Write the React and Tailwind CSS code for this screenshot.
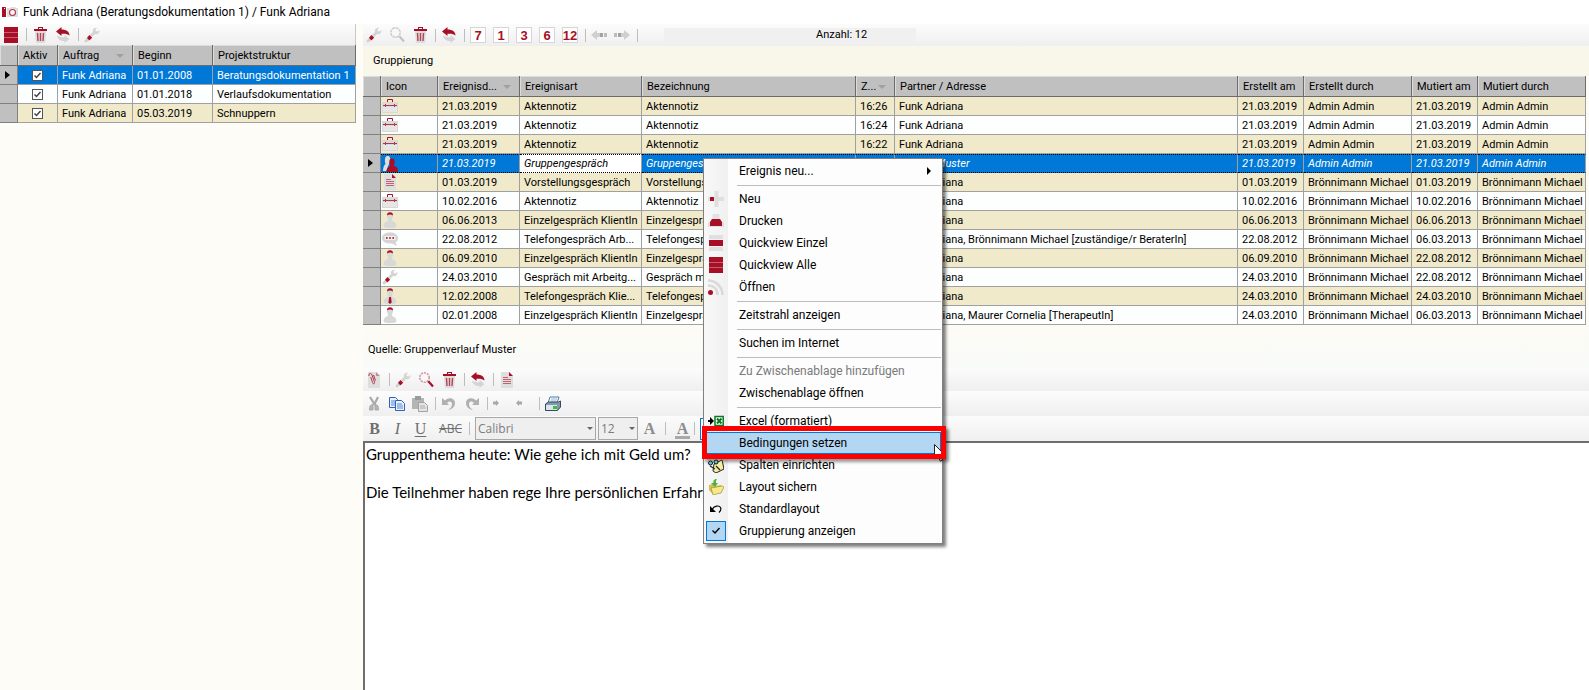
import React from 'react';

const RED = '#a80f26';
const GREY = '#d4d4d4';

function Icon({ children, className = '' }) {
  return (
    <svg viewBox="0 0 16 16" width="16" height="16" className={'block shrink-0 ' + className} aria-hidden="true">
      {children}
    </svg>
  );
}

const Stack = () => (
  <Icon>
    <path d="M1 0h14v5H1zM1 6h14v4H1zM1 11h14v5H1z" fill={RED} />
    <path d="M1 5.500h14M1 10.500h14" stroke="#c4606e" strokeWidth="1" />
  </Icon>
);

const Single = () => (
  <Icon>
    <path d="M1 0h14v4H1zM1 12h14v4H1z" fill="#e0e0e0" />
    <path d="M1 5h14v6H1z" fill={RED} />
  </Icon>
);

const Trash = () => (
  <Icon>
    <path d="M3 4h11l-1 12H4z" fill="#dcdcdc" />
    <path d="M2 2h13v2H2zM6 0h5v2H10V1H7v1H6z" fill={RED} />
    <path d="M5.500 6l.5 8M8.500 6v8M11.500 6l-.5 8" stroke="#b84352" strokeWidth="1.400" fill="none" />
  </Icon>
);

const Undo = () => (
  <Icon>
    <path d="M1 4.500L6.500 0V2.500C11 2.500 14.500 4.500 14.500 8.500C12.500 6.800 10 6.500 6.500 6.800V9Z" fill={RED} />
    <path d="M14.500 12L9.500 8V10.300C7 10.300 4.500 10 2 8.500C2.500 12 5 14 9.500 14V16Z" fill={GREY} />
  </Icon>
);

const Wrench = () => (
  <Icon>
    <path d="M6 8L9 5C8.300 2.500 10 .6 13 .8L11.200 3L13 4.800L15.400 3C15.900 6 13.600 7.800 11 7L8 10Z" fill={GREY} />
    <path d="M5.500 8L8.200 10.700L5.500 13.200C4 13.800 2.700 12.300 3.200 10.500Z" fill={RED} />
    <path d="M3 11L5 13L2 15.800L.3 14Z" fill="#d8cccd" />
  </Icon>
);

const Magnifier = ({ red }) => (
  <Icon>
    <circle cx="6.500" cy="5.500" r="4.700" fill="#f8f8f8" stroke={red ? '#cf9aa2' : '#cfcfcf'} strokeWidth="1.600" strokeDasharray={red ? '2 1' : '3 .6'} />
    <path d="M10.300 9.300L15 14.500" stroke={red ? RED : '#c3c3c3'} strokeWidth="2.200" />
  </Icon>
);

const ArrowGrey = ({ right }) => (
  <Icon className={right ? 'rotate-180' : ''}>
    <path d="M0 8L6 3V6H9V10H6V13Z" fill="#cfcfcf" />
    <path d="M9 6h3v4H9z" fill="#a2a2a2" />
    <path d="M13 6h3v4h-3z" fill="#bcbcbc" />
  </Icon>
);

const NumberTile = ({ n }) => (
  <span className="flex h-4 w-4 items-center justify-center border border-[#d6d6d6] bg-white font-['Liberation_Sans',sans-serif] text-[13px] leading-none font-bold text-[#a80f26]">
    {n}
  </span>
);

const Doc = () => (
  <Icon>
    <path d="M2 0h8l4 4v12H2z" fill="#dedede" />
    <path d="M10 0l4 4h-4z" fill={RED} />
    <path d="M4 5.500h5M4 7.500h8M4 9.500h8M4 11.500h8" stroke="#c4606e" strokeWidth="1" />
  </Icon>
);

const Clip = () => (
  <Icon>
    <path d="M2 0h8l4 4v12H2z" fill="#dedede" />
    <path d="M10 0l4 4h-4z" fill="#c58c94" />
    <path d="M3 4C2.500 1 5 .5 6 3L8.500 10C9 12 7 12.500 6.500 10.500L4.800 5M7.500 3L9.500 8.500" stroke="#b5354a" strokeWidth="1" fill="none" />
  </Icon>
);

const Case = () => (
  <Icon>
    <path d="M0 4h16v11H0z" fill="#d9d9d9" />
    <path d="M1 9h14v5H1z" fill="#e6e6e6" />
    <path d="M5.500 4V1.500h5V4" stroke={RED} strokeWidth="1" fill="none" />
    <path d="M1 7.500h14M3.500 6v3M12.500 6v3" stroke="#b5354a" strokeWidth="1" fill="none" />
  </Icon>
);

const Person = ({ tie }) => (
  <Icon>
    <path d="M8 1C10 1 11 2.300 11 4C11 6 10 7 9.800 8.500C11 10 14.500 10 14.500 14C14.500 15.500 12 16 8 16C4 16 1.500 15.500 1.500 14C1.500 10 5 10 6.200 8.500C6 7 5 6 5 4C5 2.300 6 1 8 1Z" fill="#d8d8d8" />
    <path d="M5 3.500C5 1 6 .3 8 .3C10 .3 11 1 11 3.500C9.500 2.300 6.500 2.300 5 3.500Z" fill={RED} />
    {tie && <path d="M7.200 9h1.800l.7 5.500L8 16L6.400 14.500Z" fill={RED} />}
  </Icon>
);

const Group = () => (
  <Icon>
    <path d="M5.500 0C8 0 8.500 2 8 4.500C8 6 7 6.500 7 8C6 10 5 14 4 15H1C1 12 2 9 3.500 8C2.500 5 2.500 0 5.500 0Z" fill="#dedede" />
    <path d="M10 2.500C12.500 2.500 13 4.500 12.700 6.500C12.500 8 11.800 8.600 12 9.800C14 10.800 16 11 16 16H4.500C4.500 12.500 6 11 8 10C8.300 8.600 7.500 8 7.400 6.500C7 4.500 7.800 2.500 10 2.500Z" fill={RED} />
  </Icon>
);

const Chat = () => (
  <Icon>
    <path d="M8 1.500C12.500 1.500 16 3.500 16 7C16 9 15 10.500 13.500 11.500L15 15L10 12.500C4.500 13 0 10.500 0 7C0 3.500 3.500 1.500 8 1.500Z" fill="#d4d4d4" />
    <path d="M2.500 5h11v4h-11z" fill="#efefef" />
    <path d="M4 6h1.600v2H4zM7.200 6h1.600v2H7.200zM10.400 6H12v2h-1.600z" fill="#b5354a" />
  </Icon>
);

const Plus = () => (
  <Icon>
    <path d="M6.500 0h4v6H16v4h-5.500v6h-4v-6H0V6h6.500z" fill="#dfdfdf" />
    <path d="M2 6h4v4H2z" fill={RED} />
  </Icon>
);

const PrinterRed = () => (
  <Icon>
    <path d="M4.500 1h7v5h-7z" fill="#e2e2e2" />
    <path d="M0 9h16v5H0z" fill="#dedede" />
    <path d="M4 6h8l2 3v4H2V9z" fill={RED} />
  </Icon>
);

const Feed = () => (
  <Icon>
    <path d="M0 1.500C8 1.500 14.500 8 14.500 16M0 6.500C6 6.500 9.500 10.500 9.500 16" stroke="#dadada" strokeWidth="2.600" fill="none" />
    <circle cx="2.500" cy="13.500" r="2.500" fill={RED} />
  </Icon>
);

const Excel = () => (
  <Icon>
    <path d="M0 7h2V4l4 4-4 4V9H0z" fill="#000" />
    <path d="M7 3.500h8.200v9H7z" fill="#fff" stroke="#0a7a22" strokeWidth="1.500" />
    <path d="M9 5.500l4.500 5M13.500 5.500l-4.500 5" stroke="#0a7a22" strokeWidth="2" />
  </Icon>
);

const Columns = () => (
  <Icon>
    <path d="M6 7l8-4 2 9-8 4-3-2z" fill="#f3eda0" stroke="#222" strokeWidth="1" />
    <circle cx="2.500" cy="6" r="2" fill="#5fc4cb" stroke="#111" />
    <circle cx="8" cy="5" r="2" fill="#5fc4cb" stroke="#111" />
    <path d="M2 9l5 3M8 9l4 4" stroke="#222" strokeWidth="1.200" />
  </Icon>
);

const FolderSave = () => (
  <Icon>
    <path d="M1 6l4-1 2 2 6-1 1 2v5l-9 2.500L1 11z" fill="#cfc14e" />
    <path d="M3 9l11-2 2 1-3 6-8 1.800z" fill="#f5e98b" stroke="#a5922f" strokeWidth=".7" />
    <path d="M9 0C6 0 5 2 5.500 4H3l4 4 3-4H8C7.500 2.500 8 1.500 9 0z" fill="#4cb13c" />
  </Icon>
);

const Revert = () => (
  <Icon>
    <path d="M4 8.500C6 5 11 3.800 12.500 6.500C13.500 8.500 12.500 10 11 11.500" stroke="#000" strokeWidth="1.200" fill="none" />
    <path d="M2 5v6h6z" fill="#000" />
  </Icon>
);

const Cut = () => (
  <Icon>
    <path d="M4 1l5 8M12 1L8 9" stroke="#a9a9a9" strokeWidth="2.200" />
    <path d="M7 8l-3 2-.5 4h3.500zM9 8l3 2 .5 4H9z" fill="#b5b5b5" stroke="#a9a9a9" />
  </Icon>
);

const Copy = () => (
  <Icon>
    <path d="M.5 1.500h6l2 2v8h-8z" fill="#e8f1fd" stroke="#2f62b5" />
    <path d="M2 5h4M2 7h4M2 9h4" stroke="#5b89d0" />
    <path d="M6.500 4.500h6l3 3v7h-9z" fill="#e8f1fd" stroke="#2f62b5" />
    <path d="M8 8h5M8 10h6M8 12h6" stroke="#5b89d0" />
  </Icon>
);

const Paste = () => (
  <Icon>
    <path d="M0 2h12v11H0z" fill="#b5b5b5" />
    <path d="M3 0h6v4H3z" fill="#9c9c9c" />
    <path d="M6.500 6.500h6l3 3v6h-9z" fill="#e4e4e4" stroke="#a2a2a2" />
    <path d="M8 10h5M8 12h6" stroke="#b0b0b0" />
  </Icon>
);

const CurvedArrow = ({ flip }) => (
  <Icon className={flip ? '-scale-x-100' : ''}>
    <path d="M1 2v7h7L6 7C8 4.500 11 5 11 8C11 10.500 9.500 12.500 7 14C11 13.500 14 11 14 7C14 2.500 8 .5 4 4.500z" fill="#b0b0b0" />
  </Icon>
);

const IndentMore = () => (
  <Icon>
    <path d="M0 5.500h3V4L6 7L3 10V8.500H0z" fill="#a8a8a8" />
  </Icon>
);

const IndentLess = () => (
  <Icon>
    <path d="M6 5.500H3V4L0 7L3 10V8.500h3z" fill="#a8a8a8" />
  </Icon>
);

const PrinterColor = () => (
  <Icon>
    <path d="M5 1h9l-2 6H3z" fill="#fff" stroke="#4f7aa0" />
    <path d="M6 3h6M5.500 5h6" stroke="#8fb0cc" />
    <path d="M.5 8l3-2h10l2-1v6l-3 3.500H.5z" fill="#8798a8" stroke="#33495e" />
    <path d="M1 9h11v5H1z" fill="#d9e4ee" />
    <path d="M8 10h4v3H8z" fill="#35c13a" />
  </Icon>
);

const Camera = () => (
  <Icon>
    <path d="M0 3h3.500l.5 1v9H0z" fill={RED} />
    <path d="M2 4h1v1H2z" fill="#fff" />
    <path d="M5 4h3l1-1h4l1 1h2v9H5z" fill="#dedede" />
    <circle cx="10.500" cy="8.500" r="3" fill="#f5f5f5" stroke="#b5354a" strokeWidth="1.100" />
  </Icon>
);

const Tool = ({ label, children }) => (
  <button type="button" aria-label={label} className="flex w-[23px] shrink-0 items-center">
    {children}
  </button>
);

const Sep = () => (
  <span className="flex w-[6px] shrink-0">
    <span className="h-[13px] w-px bg-[#bdbdbd]" />
  </span>
);

const STRIP = 'flex shrink-0 items-center bg-linear-to-b from-[#fcfcfc] to-[#efefef]';
const BAR = STRIP + ' pl-[3px]';
const HEAD = 'h-[21px] border-r border-b border-[#6b6b6b] bg-[#c0c0c0] p-0 pt-[2px] pl-[5px] text-left font-normal whitespace-nowrap shadow-[inset_1px_1px_0_#dcdcdc]';
const CELL_BASE = 'h-[19px] overflow-hidden border-r border-b border-[#a0a0a0] p-0 text-left whitespace-nowrap';
const CELL = CELL_BASE + ' pt-[2px] pl-1';
const CELL_CURRENT = CELL_BASE + ' pt-px pl-1';
const GRIP = 'h-[19px] border-r border-b border-[#808080] bg-[#c0c0c0] p-0';

const SortMark = () => <span className="mr-2 h-0 w-0 border-x-4 border-t-4 border-x-transparent border-t-[#a0a0a0]" />;
const RowMark = () => <span className="ml-[5px] block h-0 w-0 border-y-4 border-l-[5px] border-y-transparent border-l-black" />;

const PROJECTS = [
  ['Funk Adriana', '01.01.2008', 'Beratungsdokumentation 1'],
  ['Funk Adriana', '01.01.2018', 'Verlaufsdokumentation'],
  ['Funk Adriana', '05.03.2019', 'Schnuppern'],
];
const PROJECT_ROW = ['bg-[#0078d7] text-white', 'bg-[#fdfffe]', 'bg-[#f0eacb]'];

const ADMIN = 'Admin Admin';
const BM = 'Brönnimann Michael';
const FA = 'Funk Adriana';
const EVENTS = [
  [Case, '21.03.2019', 'Aktennotiz', 'Aktennotiz', '16:26', FA, '21.03.2019', ADMIN, '21.03.2019', ADMIN],
  [Case, '21.03.2019', 'Aktennotiz', 'Aktennotiz', '16:24', FA, '21.03.2019', ADMIN, '21.03.2019', ADMIN],
  [Case, '21.03.2019', 'Aktennotiz', 'Aktennotiz', '16:22', FA, '21.03.2019', ADMIN, '21.03.2019', ADMIN],
  [Group, '21.03.2019', 'Gruppengespräch', 'Gruppengespräch', '', 'Gruppe Muster', '21.03.2019', ADMIN, '21.03.2019', ADMIN],
  [Doc, '01.03.2019', 'Vorstellungsgespräch', 'Vorstellungsgespräch', '', FA, '01.03.2019', BM, '01.03.2019', BM],
  [Case, '10.02.2016', 'Aktennotiz', 'Aktennotiz', '', FA, '10.02.2016', BM, '10.02.2016', BM],
  [Person, '06.06.2013', 'Einzelgespräch KlientIn', 'Einzelgespräch', '', FA, '06.06.2013', BM, '06.06.2013', BM],
  [Chat, '22.08.2012', 'Telefongespräch Arb...', 'Telefongespräch', '', FA + ', Brönnimann Michael [zuständige/r BeraterIn]', '22.08.2012', BM, '06.03.2013', BM],
  [Person, '06.09.2010', 'Einzelgespräch KlientIn', 'Einzelgespräch', '', FA, '06.09.2010', BM, '22.08.2012', BM],
  [Wrench, '24.03.2010', 'Gespräch mit Arbeitg...', 'Gespräch mit', '', FA, '24.03.2010', BM, '22.08.2012', BM],
  [PersonTie, '12.02.2008', 'Telefongespräch Klie...', 'Telefongespräch', '', FA, '24.03.2010', BM, '24.03.2010', BM],
  [Person, '02.01.2008', 'Einzelgespräch KlientIn', 'Einzelgespräch', '', FA + ', Maurer Cornelia [TherapeutIn]', '24.03.2010', BM, '06.03.2013', BM],
];

function PersonTie() {
  return <Person tie />;
}

function ProjectPanel() {
  return (
    <section className="flex w-[356px] shrink-0 flex-col bg-[#fdfcf6]">
      <div className={BAR + ' h-[21px] border-r border-[#c8c8c8]'}>
        <Tool label="Quickview"><Stack /></Tool>
        <Sep />
        <Tool label="Löschen"><Trash /></Tool>
        <Tool label="Rückgängig"><Undo /></Tool>
        <Sep />
        <Tool label="Einstellungen"><Wrench /></Tool>
      </div>
      <table className="w-full table-fixed border-separate border-spacing-0">
        <colgroup>
          <col className="w-[18px]" />
          <col className="w-[40px]" />
          <col className="w-[75px]" />
          <col className="w-[80px]" />
          <col />
        </colgroup>
        <thead>
          <tr>
            <th className={HEAD} aria-label="Zeile" />
            <th className={HEAD}>Aktiv</th>
            <th className={HEAD}><span className="flex items-center justify-between">Auftrag <SortMark /></span></th>
            <th className={HEAD}>Beginn</th>
            <th className={HEAD}>Projektstruktur</th>
          </tr>
        </thead>
        <tbody>
          {PROJECTS.map((row, i) => (
            <tr key={row[2]} className={PROJECT_ROW[i]}>
              <td className={GRIP}>{i === 0 && <RowMark />}</td>
              <td className={CELL_BASE}>
                <span className="relative ml-[14px] block h-[11px] w-[11px]">
                  <input type="checkbox" defaultChecked aria-label={'Aktiv ' + row[2]} className="block h-[11px] w-[11px] appearance-none border border-[#555] bg-white" />
                  <svg viewBox="0 0 11 11" className="pointer-events-none absolute inset-0" aria-hidden="true">
                    <path d="M2.500 5.500L4.500 7.500L8.500 3" fill="none" stroke="#444" strokeWidth="1.500" />
                  </svg>
                </span>
              </td>
              {row.map((v) => <td key={v} className={CELL}>{v}</td>)}
            </tr>
          ))}
        </tbody>
      </table>
    </section>
  );
}

function EventTable() {
  return (
    <table className="w-full table-fixed border-separate border-spacing-0">
      <colgroup>
        <col className="w-[18px]" />
        <col className="w-[57px]" />
        <col className="w-[82px]" />
        <col className="w-[122px]" />
        <col className="w-[214px]" />
        <col className="w-[39px]" />
        <col />
        <col className="w-[66px]" />
        <col className="w-[108px]" />
        <col className="w-[66px]" />
        <col className="w-[108px]" />
      </colgroup>
      <thead>
        <tr>
          <th className={HEAD} aria-label="Zeile" />
          <th className={HEAD}>Icon</th>
          <th className={HEAD}><span className="flex items-center justify-between">Ereignisd... <SortMark /></span></th>
          <th className={HEAD}>Ereignisart</th>
          <th className={HEAD}>Bezeichnung</th>
          <th className={HEAD}><span className="flex items-center justify-between">Z... <SortMark /></span></th>
          <th className={HEAD}>Partner / Adresse</th>
          <th className={HEAD}>Erstellt am</th>
          <th className={HEAD}>Erstellt durch</th>
          <th className={HEAD}>Mutiert am</th>
          <th className={HEAD}>Mutiert durch</th>
        </tr>
      </thead>
      <tbody>
        {EVENTS.map(([Pic, ...vals], i) => {
          const current = i === 3;
          const tone = current ? 'bg-[#0078d7] text-white italic' : i % 2 ? 'bg-[#fdfffe]' : 'bg-[#f0eacb]';
          const dotted = current ? ' border-t border-t-black border-b-black [border-top-style:dotted] [border-bottom-style:dotted]' : '';
          return (
            <tr key={i} className={tone}>
              <td className={GRIP}>{current && <RowMark />}</td>
              <td className={CELL_BASE + dotted}><span className="ml-px flex h-[17px] items-center"><Pic /></span></td>
              {vals.map((v, c) => (
                <td key={c} className={(current ? CELL_CURRENT : CELL) + dotted + (current && c === 1 ? ' bg-white text-black' : '')}>{v}</td>
              ))}
            </tr>
          );
        })}
      </tbody>
    </table>
  );
}

const SelectBox = ({ label, value, width }) => (
  <span className={'relative flex h-[23px] shrink-0 ' + width}>
    <select aria-label={label} className="h-full w-full appearance-none border border-[#a8a8a8] bg-[#efefef] pl-[2px] text-[12px] text-[#7d7d7d]">
      <option>{value}</option>
    </select>
    <span className="pointer-events-none absolute top-[10px] right-[3px] h-0 w-0 border-x-[3px] border-t-[3px] border-x-transparent border-t-[#666]" />
  </span>
);

const MENU = [
  ['Ereignis neu...', null, 'sub'],
  null,
  ['Neu', Plus],
  ['Drucken', PrinterRed],
  ['Quickview Einzel', Single],
  ['Quickview Alle', Stack],
  ['Öffnen', Feed],
  null,
  ['Zeitstrahl anzeigen'],
  null,
  ['Suchen im Internet'],
  null,
  ['Zu Zwischenablage hinzufügen', null, 'off'],
  ['Zwischenablage öffnen'],
  null,
  ['Excel (formatiert)', Excel],
  ['Bedingungen setzen', null, 'hot'],
  ['Spalten einrichten', Columns],
  ['Layout sichern', FolderSave],
  ['Standardlayout', Revert],
  ['Gruppierung anzeigen', null, 'check'],
];

function ContextMenu() {
  return (
    <div role="menu" className="absolute top-[158px] left-[703px] w-[240px] border border-[#808080] bg-[#fdfdfd] bg-linear-to-r from-[#f8f8f8] from-0% via-[#f0f0f0] via-[24px] to-[#fdfdfd] to-[24px] p-px font-['Roboto','Open_Sans',sans-serif] text-[12px] leading-[16px] shadow-[3px_3px_3px_rgba(0,0,0,0.5)]">
      {MENU.map((item, i) => {
        if (!item) {
          return <div key={i} role="separator" className="ml-8 flex h-[6px] items-center"><span className="h-px w-full bg-[#bdbdbd]" /></div>;
        }
        const [text, Pic, kind] = item;
        return (
          <button
            key={i}
            type="button"
            role="menuitem"
            disabled={kind === 'off'}
            className={
              'relative flex h-[22px] w-full items-center text-left whitespace-nowrap ' +
              (kind === 'off' ? 'text-[#7a7a7a]' : 'text-black') +
              (kind === 'hot' ? ' border border-[#0078d7] bg-[#b3d7f3]' : '')
            }
          >
            <span className={'flex shrink-0 items-center ' + (kind === 'hot' ? 'w-[33px]' : kind === 'check' ? 'w-[34px] pl-px' : 'w-[34px] pl-[3px]')}>
              {Pic && <Pic />}
              {kind === 'check' && (
                <span className="flex h-5 w-5 items-center justify-center border border-[#0078d7] bg-[#b3d7f3]">
                  <svg viewBox="0 0 10 10" width="10" height="10" aria-hidden="true"><path d="M1.500 4.500L4 7L8.500 2" fill="none" stroke="#000" strokeWidth="1.400" /></svg>
                </span>
              )}
            </span>
            {text}
            {kind === 'sub' && <span className="mr-[10px] ml-auto h-0 w-0 border-y-4 border-l-4 border-y-transparent border-l-black" />}
            {kind === 'hot' && (
              <>
                <svg viewBox="0 0 12 19" width="12" height="19" className="absolute top-[11px] right-[-6px]" aria-hidden="true">
                  <path d="M.5 .5V15L4 11.800L6.300 17.200L8.600 16.200L6.300 11H11Z" fill="#fff" stroke="#222" />
                </svg>
                <span className="pointer-events-none absolute -top-[7px] -right-[6px] -bottom-[6px] -left-[4px] border-[5px] border-[#ff0000] shadow-[3px_3px_3px_rgba(0,0,0,0.4)]" />
              </>
            )}
          </button>
        );
      })}
    </div>
  );
}

const FORMAT = "flex w-[23px] shrink-0 justify-center font-['Liberation_Serif',serif] text-[16px] leading-5";

export default function App() {
  return (
    <div className="relative flex min-h-screen flex-col overflow-hidden bg-[#fdfcf6] font-['Roboto','Liberation_Sans',sans-serif] text-[11px] leading-[16px] text-black">
      <header className="flex h-[24px] shrink-0 items-center gap-[5px] bg-white pl-[2px] font-['Roboto','Open_Sans',sans-serif] text-[12px]">
        <Camera />
        <h1>Funk Adriana (Beratungsdokumentation 1) / Funk Adriana</h1>
      </header>

      <main className="flex grow gap-[7px]">
        <ProjectPanel />

        <section className="flex min-w-0 grow flex-col">
          <div className={BAR + ' h-[22px]'}>
            <Tool label="Einstellungen"><Wrench /></Tool>
            <Tool label="Suchen"><Magnifier /></Tool>
            <Tool label="Löschen"><Trash /></Tool>
            <Sep />
            <Tool label="Rückgängig"><Undo /></Tool>
            <Sep />
            {['7', '1', '3', '6', '12'].map((n) => (
              <Tool key={n} label={n + ' anzeigen'}><NumberTile n={n} /></Tool>
            ))}
            <Sep />
            <Tool label="Zurück"><ArrowGrey /></Tool>
            <Tool label="Vor"><ArrowGrey right /></Tool>
            <Sep />
            <output className="ml-[21px] w-[252px] bg-[#f0f0f0] pl-[152px] leading-[14px]">Anzahl: 12</output>
          </div>
          <div className="flex h-[30px] shrink-0 items-center bg-[#f9f6ea] pl-[10px]">Gruppierung</div>
          <div className="pr-[3px]"><EventTable /></div>

          <div className="flex h-[43px] shrink-0 items-center bg-linear-to-b from-[#fdfbf5] to-[#f9fbf8] pt-[6px] pl-[5px]">
            Quelle: Gruppenverlauf Muster
          </div>

          <div className={BAR + ' h-[23px]'}>
            <Tool label="Anhang"><Clip /></Tool>
            <Sep />
            <Tool label="Einstellungen"><Wrench /></Tool>
            <Tool label="Suchen"><Magnifier red /></Tool>
            <Tool label="Löschen"><Trash /></Tool>
            <Sep />
            <Tool label="Rückgängig"><Undo /></Tool>
            <Sep />
            <Tool label="Dokument"><Doc /></Tool>
          </div>
          <div className={BAR + ' h-[25px]'}>
            <Tool label="Ausschneiden"><Cut /></Tool>
            <Tool label="Kopieren"><Copy /></Tool>
            <Tool label="Einfügen"><Paste /></Tool>
            <Sep />
            <Tool label="Rückgängig"><CurvedArrow /></Tool>
            <Tool label="Wiederholen"><CurvedArrow flip /></Tool>
            <Sep />
            <Tool label="Einzug vergrössern"><IndentMore /></Tool>
            <Tool label="Einzug verkleinern"><IndentLess /></Tool>
            <Sep />
            <Tool label="Drucken"><PrinterColor /></Tool>
          </div>
          <div className={STRIP + " h-[25px] font-['Open_Sans','Noto_Sans',sans-serif]"}>
            <button type="button" className={FORMAT + ' font-bold text-[#6f6f6f]'}>B</button>
            <button type="button" className={FORMAT + ' text-[#6f6f6f] italic'}>I</button>
            <button type="button" className={FORMAT + ' text-[#6f6f6f] underline underline-offset-2'}>U</button>
            <button type="button" className="flex w-[37px] shrink-0 justify-center text-[12px] text-[#6f6f6f] line-through">ABC</button>
            <Sep />
            <SelectBox label="Schriftart" value="Calibri" width="w-[121px]" />
            <span className="w-[2px]" />
            <SelectBox label="Schriftgrösse" value="12" width="w-[40px]" />
            <button type="button" className={FORMAT + ' font-bold text-[#8c8c8c]'}>A</button>
            <span className="w-1" />
            <Sep />
            <button type="button" className={FORMAT + ' font-bold text-[#8c8c8c]'}><span className="h-5 border-b-[3px] border-[#a9a9a9] px-[2px]">A</span></button>
            <Sep />
            <button type="button" aria-label="Linksbündig" className="h-[22px] w-[23px] border border-[#0078d7]" />
          </div>
          <textarea
            aria-label="Notiz"
            className="w-full grow resize-none border-t-2 border-l-2 border-[#6e6e6e] bg-white pt-[2px] pl-px font-['Lato','Open_Sans',sans-serif] text-[15px] leading-[19px] outline-none"
            defaultValue={'Gruppenthema heute: Wie gehe ich mit Geld um?\n\nDie Teilnehmer haben rege Ihre persönlichen Erfahrungen ausgetauscht.'}
          />
        </section>
      </main>

      <ContextMenu />
    </div>
  );
}
